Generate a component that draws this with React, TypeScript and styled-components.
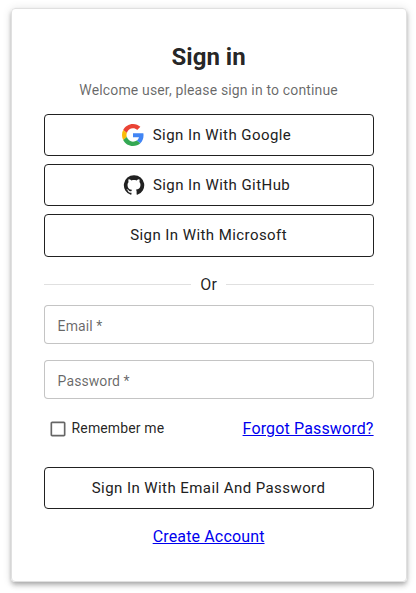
import React from "react";
import styled, { createGlobalStyle } from "styled-components";

const GlobalStyle = createGlobalStyle`
  *, *::before, *::after { box-sizing: border-box; }
  body {
    margin: 0;
    background: #fff;
    color: rgba(0, 0, 0, 0.87);
    font-family: Roboto, "Liberation Sans", sans-serif;
    font-size: 16px;
    line-height: 24px;
    letter-spacing: 0.15px;
  }
`;

const Page = styled.main`
  display: flex;
  justify-content: flex-start;
  align-items: flex-start;
  min-height: 593px;
  padding: 8px 0 0 10.6px;
`;

const Card = styled.section`
  display: flex;
  flex-direction: column;
  align-items: center;
  width: 396px;
  height: 574px;
  padding: 32px;
  border: 1px solid #e0e0e0;
  border-radius: 4px;
  box-shadow: 0 2px 4px -1px rgba(0, 0, 0, 0.2), 0 4px 5px 0 rgba(0, 0, 0, 0.14),
    0 1px 10px 0 rgba(0, 0, 0, 0.12);
`;

const Title = styled.h1`
  margin: 0 0 7px;
  font-size: 24px;
  font-weight: 700;
  line-height: 32px;
  letter-spacing: 0;
  color: rgba(0, 0, 0, 0.87);
`;

const Subtitle = styled.p`
  margin: 0 0 13.75px;
  font-size: 14px;
  line-height: 20px;
  color: rgba(0, 0, 0, 0.6);
`;

const Providers = styled.div`
  display: flex;
  flex-direction: column;
  gap: 8px;
  width: 100%;
`;

const Button = styled.button`
  display: flex;
  align-items: center;
  justify-content: center;
  width: 100%;
  padding: 7px 21px;
  border: 1px solid #212121;
  border-radius: 4px;
  background: transparent;
  color: #212121;
  font-family: inherit;
  font-size: 15px;
  line-height: 26.25px;
  letter-spacing: 0.43px;
`;

const StartIcon = styled.span<{ $gap: number }>`
  display: inherit;
  margin: 0 ${({ $gap }) => $gap}px 0 -4px;

  svg {
    width: 22px;
    height: 22px;
  }
`;

const Divider = styled.div`
  display: flex;
  align-items: center;
  gap: 9.3px;
  width: 100%;
  margin: 16px 0 8px;

  &::before,
  &::after {
    content: "";
    flex: 1;
    border-top: 1px solid rgba(0, 0, 0, 0.12);
  }
`;

const Form = styled.form`
  width: 100%;
`;

const Input = styled.input`
  display: block;
  width: 100%;
  height: 39px;
  margin: 0 0 16px;
  padding: 3px 13px 0;
  border: 1px solid rgba(0, 0, 0, 0.23);
  border-radius: 4px;
  outline: none;
  font-family: inherit;
  font-size: 14px;
  letter-spacing: 0.08px;

  &::placeholder {
    color: rgba(0, 0, 0, 0.6);
    opacity: 1;
  }
`;

const Options = styled.div`
  display: flex;
  align-items: center;
  justify-content: space-between;
  height: 26px;
  margin-bottom: 26px;
`;

const Remember = styled.label`
  display: flex;
  align-items: center;
  gap: 4px;
  padding-left: 4px;
  font-size: 14px;
  line-height: 20px;
  letter-spacing: 0.13px;

  svg {
    margin-top: 2px;
    fill: rgba(0, 0, 0, 0.6);
  }
`;

const Link = styled.a`
  color: #0000ee;
  text-decoration: underline;

  ${Options} & {
    padding-top: 2px;
  }
`;

const Footer = styled.div`
  margin-top: 16px;
`;

const GoogleIcon = () => (
  <svg viewBox="0 0 48 48" aria-hidden="true">
    <path fill="#EA4335" d="M24 9.5c3.54 0 6.71 1.22 9.21 3.6l6.85-6.85C35.9 2.38 30.47 0 24 0 14.62 0 6.51 5.38 2.56 13.22l7.98 6.19C12.43 13.72 17.74 9.5 24 9.5z" />
    <path fill="#4285F4" d="M46.98 24.55c0-1.57-.15-3.09-.38-4.55H24v9.02h12.94c-.58 2.96-2.26 5.48-4.78 7.18l7.73 6c4.51-4.18 7.09-10.36 7.09-17.65z" />
    <path fill="#FBBC05" d="M10.53 28.59c-.48-1.45-.76-2.99-.76-4.59s.27-3.14.76-4.59l-7.98-6.19C.92 16.46 0 20.12 0 24c0 3.88.92 7.54 2.56 10.78l7.97-6.19z" />
    <path fill="#34A853" d="M24 48c6.48 0 11.93-2.13 15.89-5.81l-7.73-6c-2.15 1.45-4.92 2.3-8.16 2.3-6.26 0-11.57-4.22-13.47-9.91l-7.98 6.19C6.51 42.62 14.62 48 24 48z" />
  </svg>
);

const GitHubIcon = () => (
  <svg viewBox="0 0 24 24" fill="#212121" aria-hidden="true">
    <path d="M12 1.27a11 11 0 00-3.48 21.46c.55.09.73-.28.73-.55v-1.84c-3.03.64-3.67-1.46-3.67-1.46-.55-1.29-1.28-1.65-1.28-1.65-.92-.65.1-.65.1-.65 1.1 0 1.73 1.1 1.73 1.1.92 1.65 2.57 1.2 3.21.92a2 2 0 01.64-1.47c-2.47-.27-5.04-1.19-5.04-5.5 0-1.1.46-2.1 1.2-2.84a3.76 3.76 0 010-2.93s.91-.28 3.11 1.1c1.8-.49 3.7-.49 5.5 0 2.1-1.38 3.02-1.1 3.02-1.1a3.76 3.76 0 01.1 2.93c.83.74 1.2 1.74 1.2 2.94 0 4.21-2.57 5.13-5.04 5.4.45.37.82.92.82 2.02v3.03c0 .27.1.64.73.55A11 11 0 0012 1.27" />
  </svg>
);

const CheckboxIcon = () => (
  <svg width="20" height="20" viewBox="0 0 24 24" aria-hidden="true">
    <path d="M19 5v14H5V5h14m0-2H5c-1.1 0-2 .9-2 2v14c0 1.1.9 2 2 2h14c1.1 0 2-.9 2-2V5c0-1.1-.9-2-2-2z" />
  </svg>
);

const providers = [
  { name: "Google", icon: <GoogleIcon />, gap: 8.8 },
  { name: "GitHub", icon: <GitHubIcon />, gap: 8 },
  { name: "Microsoft", icon: null, gap: 0 },
];

export default function App() {
  return (
    <>
      <GlobalStyle />
      <Page>
        <Card>
          <Title>Sign in</Title>
          <Subtitle>Welcome user, please sign in to continue</Subtitle>
          <Providers>
            {providers.map(({ name, icon, gap }) => (
              <Button key={name} type="button">
                {icon && <StartIcon $gap={gap}>{icon}</StartIcon>}
                Sign In With {name}
              </Button>
            ))}
          </Providers>
          <Divider>Or</Divider>
          <Form>
            <Input type="email" placeholder="Email *" />
            <Input type="password" placeholder="Password *" />
            <Options>
              <Remember>
                <CheckboxIcon />
                Remember me
              </Remember>
              <Link href="#">Forgot Password?</Link>
            </Options>
            <Button type="button">Sign In With Email And Password</Button>
          </Form>
          <Footer>
            <Link href="#">Create Account</Link>
          </Footer>
        </Card>
      </Page>
    </>
  );
}
